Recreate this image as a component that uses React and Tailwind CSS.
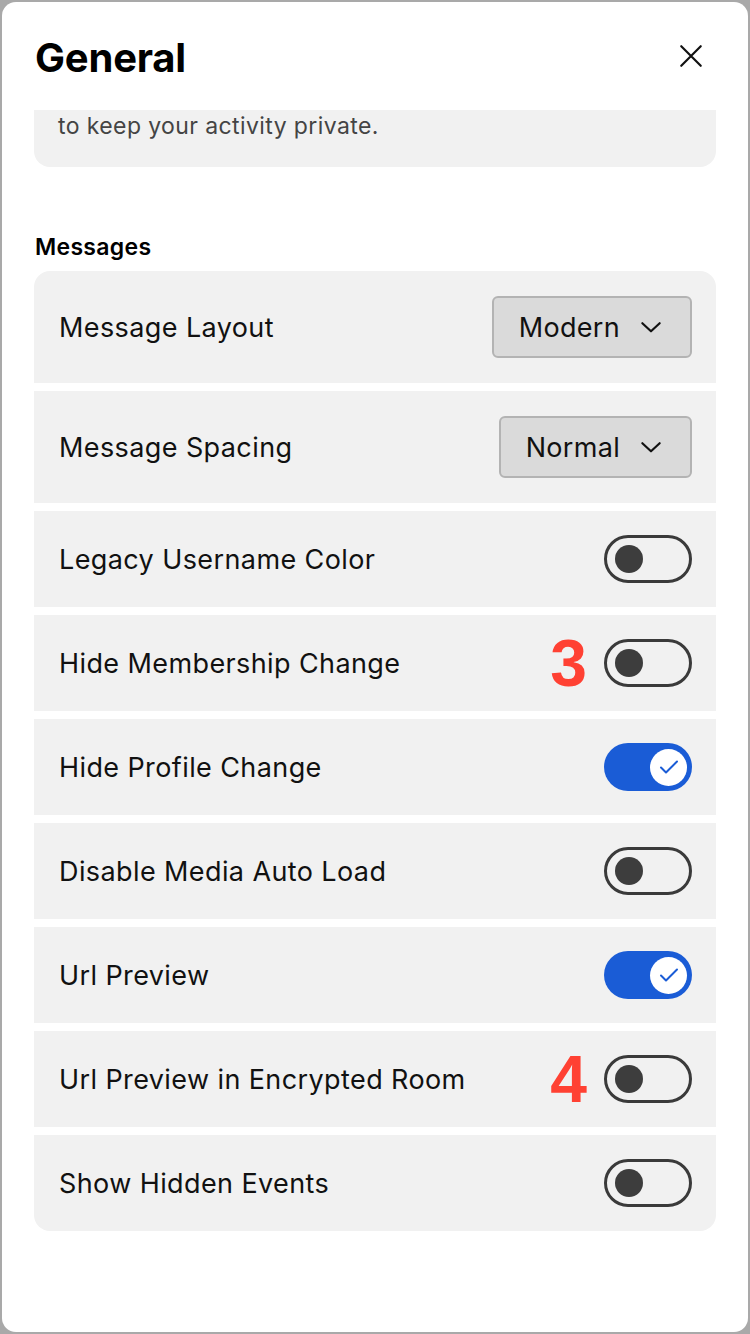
import { useState } from "react";

const Toggle = ({ on }) => {
  if (on) {
    return (
      <div className="w-[88px] h-[48px] rounded-full bg-[#1a5cd6] flex items-center justify-end pr-[5px]">
        <div className="w-[37px] h-[37px] rounded-full bg-white flex items-center justify-center">
          <svg width="24" height="24" viewBox="0 0 24 24" fill="none" stroke="#1a5cd6" strokeWidth="2" strokeLinecap="round" strokeLinejoin="round">
            <path d="M4 12.5l5 5L20 6.5" />
          </svg>
        </div>
      </div>
    );
  }
  return (
    <div className="w-[88px] h-[48px] rounded-full border-[3px] border-[#3a3a3a] flex items-center pl-[8px]">
      <div className="w-[28px] h-[28px] rounded-full bg-[#3d3d3d]" />
    </div>
  );
};

const Select = ({ value }) => (
  <div className="h-[62px] flex items-center gap-[18px] pl-[25px] pr-[26px] bg-[#dadada] border-[2px] border-[#b3b3b3] rounded-[6px] text-[27px] tracking-[0.3px] text-[#111]">
    <span className="mt-[3px]">{value}</span>
    <svg width="26" height="26" viewBox="0 0 24 24" fill="none" stroke="#111" strokeWidth="2" strokeLinecap="round" strokeLinejoin="round">
      <path d="M4 8.5l8 7.5 8-7.5" />
    </svg>
  </div>
);

const rows = [
  { label: "Message Layout", select: "Modern" },
  { label: "Message Spacing", select: "Normal" },
  { label: "Legacy Username Color", on: false },
  { label: "Hide Membership Change", on: false, mark: "3" },
  { label: "Hide Profile Change", on: true },
  { label: "Disable Media Auto Load", on: false },
  { label: "Url Preview", on: true },
  { label: "Url Preview in Encrypted Room", on: false, mark: "4" },
  { label: "Show Hidden Events", on: false },
];

export default function App() {
  const [items] = useState(rows);
  return (
    <div
      className="w-[750px] h-[1334px] bg-[#a9a9a9] p-[2px]"
      style={{ fontFamily: "Inter, 'Noto Sans', sans-serif" }}
    >
      <div className="h-full bg-white rounded-[14px] overflow-hidden flex flex-col">
        <div className="h-[108px] flex items-center justify-between pl-[33px] pr-[44px] shrink-0">
          <h1 className="text-[40px] font-bold text-black tracking-[-0.2px] mt-[4px]">General</h1>
          <svg width="26" height="26" viewBox="0 0 24 24" fill="none" stroke="#111" strokeWidth="2" strokeLinecap="round">
            <path d="M3 3l18 18M21 3L3 21" />
          </svg>
        </div>

        <div className="px-[32px]">
          <div className="bg-[#f1f1f1] rounded-b-[16px] h-[57px] px-[24px] pt-0 text-[23px] tracking-[0.4px] text-[#444] leading-[32px]">
            to keep your activity private.
          </div>

          <h2 className="mt-[66px] mb-[10px] text-[23px] font-semibold tracking-[0.3px] text-black leading-[28px] pl-[1px]">
            Messages
          </h2>

          <div className="flex flex-col gap-[8px]">
            {items.map((r, i) => (
              <div
                key={r.label}
                className={
                  "bg-[#f1f1f1] flex items-center justify-between pl-[25px] pr-[24px] " +
                  (r.select ? "h-[112px] " : "h-[96px] ") +
                  (i === 0 ? "rounded-t-[16px] " : "") +
                  (i === items.length - 1 ? "rounded-b-[16px]" : "")
                }
              >
                <span className="mt-[3px] text-[27px] tracking-[0.4px] text-[#111]">{r.label}</span>
                <div className="flex items-center gap-[17px]">
                  {r.mark && (
                    <span className="text-[66px] font-bold text-[#ff4133] leading-none" style={{ fontFamily: "'Liberation Sans', Arial, sans-serif" }}>
                      {r.mark}
                    </span>
                  )}
                  {r.select ? <Select value={r.select} /> : <Toggle on={r.on} />}
                </div>
              </div>
            ))}
          </div>
        </div>
      </div>
    </div>
  );
}
